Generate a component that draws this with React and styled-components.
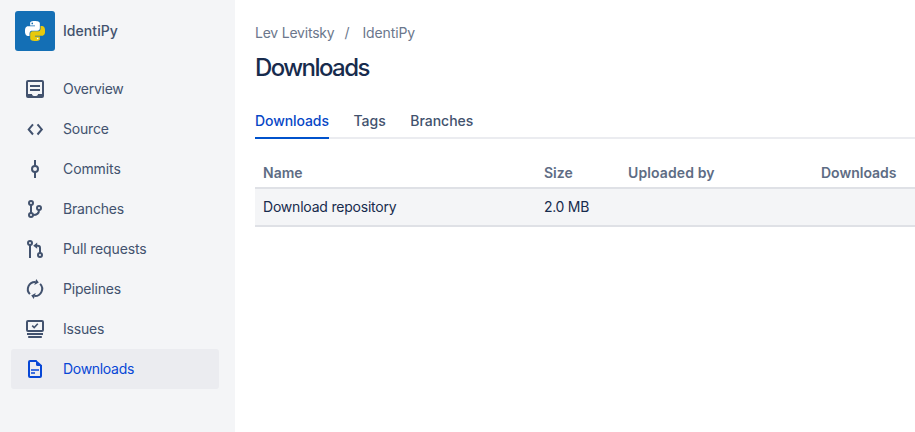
import React from "react";
import styled, { createGlobalStyle } from "styled-components";

const GlobalStyle = createGlobalStyle`
  * { box-sizing: border-box; }
  body {
    margin: 0;
    overflow: hidden;
    background: #fff;
    color: #172b4d;
    font: 14px/20px Inter, "Liberation Sans", sans-serif;
  }
`;

const Page = styled.div`
  display: flex;
  width: 100%;
  height: 100vh;
  overflow: hidden;
`;

const Sidebar = styled.aside`
  flex: 0 0 235px;
  padding: 11px 16px 0 11px;
  background: #f4f5f7;
  color: #42526e;
`;

const Repo = styled.div`
  display: flex;
  align-items: center;
  height: 40px;
  margin: 0 0 18px 4px;
  gap: 8px;
`;

const Avatar = styled.div`
  display: flex;
  align-items: center;
  justify-content: center;
  width: 40px;
  height: 40px;
  border-radius: 3px;
  background: #146fb5;
`;

const Text = styled.span`
  white-space: nowrap;
  letter-spacing: ${(p) => p.$track || 0}px;
`;

const RepoName = styled(Text)`
  font-weight: 500;
`;

const NavItem = styled.a`
  display: flex;
  align-items: center;
  gap: 16px;
  height: 40px;
  padding-left: 12px;
  border-radius: 3px;
  color: ${(p) => (p.$active ? "#0747d6" : "#42526e")};
  background: ${(p) => (p.$active ? "#ebecf0" : "transparent")};
`;

const Icon = styled.svg`
  flex: none;
  width: 24px;
  height: 24px;
  fill: none;
  stroke: currentColor;
  stroke-width: 2;
`;

const Main = styled.main`
  flex: 1;
  min-width: 0;
  padding: 23px 0 0 20px;
`;

const Crumbs = styled.nav`
  display: flex;
  height: 20px;
  color: #6b778c;
`;

const Slash = styled.span`
  width: 28px;
  padding-left: 10px;
`;

const Title = styled.h1`
  margin: 11px 0 0;
  font-size: 24px;
  line-height: 28px;
  font-weight: 500;
  letter-spacing: ${(p) => p.$track}px;
`;

const Tabs = styled.div`
  display: flex;
  gap: 24.5px;
  height: 34px;
  margin-top: 23px;
  box-shadow: inset 0 -2px #ebecf0;
`;

const Tab = styled.a`
  height: 34px;
  padding-top: 6px;
  font-weight: 500;
  white-space: nowrap;
  letter-spacing: ${(p) => p.$track || 0}px;
  color: ${(p) => (p.$active ? "#0747c6" : "#42526e")};
  box-shadow: ${(p) => (p.$active ? "inset 0 -2px #0052cc" : "none")};
`;

const Row = styled.div`
  display: grid;
  grid-template-columns: 281px 84px 193px 1fr;
  align-items: center;
  padding-left: 8px;
  border-bottom: 2px solid #dfe1e6;
`;

const HeadRow = styled(Row)`
  height: 32px;
  margin-top: 18px;
  padding-top: 2px;
  color: #5e6c84;
  font-weight: 600;
`;

const BodyRow = styled(Row)`
  height: 38px;
  background: #f4f5f7;
`;

const glyphs = {
  Overview: (
    <>
      <path
        fill="currentColor"
        fillRule="evenodd"
        stroke="none"
        d="M5 3h14a2 2 0 0 1 2 2v14a2 2 0 0 1-2 2H5a2 2 0 0 1-2-2V5a2 2 0 0 1 2-2zm0 2v12h4a3 2 0 0 0 6 0h4V5z"
      />
      <path d="M7 9h10M7 13h10" />
    </>
  ),
  Source: <path d="M10 7.3 5.7 12.4 10 17.5M14.5 7.3l4.3 5.1-4.3 5.1" />,
  Commits: (
    <>
      <circle cx="12" cy="12" r="3" />
      <path d="M12 3v6M12 15v6" />
    </>
  ),
  Branches: (
    <>
      <circle cx="8" cy="6" r="2" />
      <circle cx="8" cy="18" r="2" />
      <circle cx="16" cy="11" r="2" />
      <path d="M8 8v8M16 13c0 3-2 5-6 5" />
    </>
  ),
  "Pull requests": (
    <>
      <circle cx="7" cy="6" r="2" />
      <circle cx="17" cy="18" r="2" />
      <path d="M7 8v13M17 16v-5c0-1.6-.7-2.3-2.2-2.3H12" />
      <path fill="currentColor" stroke="none" d="M14.2 5.6v6.2l-4-3.1z" />
    </>
  ),
  Pipelines: (
    <>
      <path d="M6.9 17.1A7.2 7.2 0 0 1 12.5 4.9M17.1 6.9A7.2 7.2 0 0 1 11.5 19.1" />
      <path fill="currentColor" stroke="none" d="M13.2 2l2.6 3.6-4.5 2.4zM10.8 22l-2.6-3.6 4.5-2.4z" />
    </>
  ),
  Issues: (
    <>
      <rect x="4" y="4" width="16" height="10" rx="1" />
      <path strokeWidth="1.6" d="m9.2 8.7 2 1.9 3.6-3.8" />
      <path d="M4 17h16M5.2 20h13.6" />
    </>
  ),
  Downloads: (
    <>
      <path d="M13.5 4H7a1 1 0 0 0-1 1v14a1 1 0 0 0 1 1h10a1 1 0 0 0 1-1V8.5" />
      <path fill="currentColor" stroke="none" d="M13 3l6 5.2V9h-4.5A1.5 1.5 0 0 1 13 7.5z" />
      <path d="M8 13h8M8 16h4" strokeWidth="1.7" />
    </>
  ),
};

const nav = [
  ["Overview", -0.25],
  ["Source", -0.2],
  ["Commits", -0.1],
  ["Branches", -0.17],
  ["Pull requests", -0.15],
  ["Pipelines", -0.18],
  ["Issues", -0.2],
  ["Downloads", -0.3],
];

const PythonLogo = () => (
  <svg width="20" height="20" viewBox="0 0 24 24">
    <path
      fill="#fff"
      d="M14.25.18l.9.2.73.26.59.3.45.32.34.34.25.34.16.33.1.3.04.26.02.2-.01.13V8.5l-.05.63-.13.55-.21.46-.26.38-.3.31-.33.25-.35.19-.35.14-.33.1-.3.07-.26.04-.21.02H8.77l-.69.05-.59.14-.5.22-.41.27-.33.32-.27.35-.2.36-.15.37-.1.35-.07.32-.04.27-.02.21v3.06H3.17l-.21-.03-.28-.07-.32-.12-.35-.18-.36-.26-.36-.36-.35-.46-.32-.59-.28-.73-.21-.88-.14-1.05-.05-1.23.06-1.22.16-1.04.24-.87.32-.71.36-.57.4-.44.42-.33.42-.24.4-.16.36-.1.32-.05.24-.01h.16l.06.01h8.16v-.83H6.18l-.01-2.75-.02-.37.05-.34.11-.31.17-.28.25-.26.31-.23.38-.2.44-.18.51-.15.58-.12.64-.1.71-.06.77-.04.84-.02 1.27.05z"
    />
    <path
      fill="#e8c90c"
      d="M21.1 6.11l.28.06.32.12.35.18.36.27.36.35.35.47.32.59.28.73.21.88.14 1.04.05 1.23-.06 1.23-.16 1.04-.24.86-.32.71-.36.57-.4.45-.42.33-.42.24-.4.16-.36.09-.32.05-.24.02-.16-.01h-8.22v.82h5.84l.01 2.76.02.36-.05.34-.11.31-.17.29-.25.25-.31.24-.38.2-.44.17-.51.15-.58.13-.64.09-.71.07-.77.04-.84.01-1.27-.04-1.07-.14-.9-.2-.73-.25-.59-.3-.45-.33-.34-.34-.25-.34-.16-.33-.1-.3-.04-.25-.02-.2.01-.13v-5.34l.05-.64.13-.54.21-.46.26-.38.3-.32.33-.24.35-.2.35-.14.33-.1.3-.06.26-.04.21-.02.13-.01h5.84l.69-.05.59-.14.5-.21.41-.28.33-.32.27-.35.2-.36.15-.36.1-.35.07-.32.04-.28.02-.21V6.07h2.09l.14.01z"
    />
    <circle cx="8.7" cy="2.9" r="1" fill="#146fb5" />
    <circle cx="15.2" cy="21.1" r="1" fill="#fff" />
  </svg>
);

export default function App() {
  return (
    <Page>
      <GlobalStyle />
      <Sidebar>
        <Repo>
          <Avatar>
            <PythonLogo />
          </Avatar>
          <RepoName $track={0.05}>IdentiPy</RepoName>
        </Repo>
        {nav.map(([label, track]) => (
          <NavItem key={label} $active={label === "Downloads"}>
            <Icon viewBox="0 0 24 24">{glyphs[label]}</Icon>
            <Text $track={track}>{label}</Text>
          </NavItem>
        ))}
      </Sidebar>
      <Main>
        <Crumbs>
          <Text $track={-0.22}>Lev Levitsky</Text>
          <Slash>/</Slash>
          <Text $track={-0.12}>IdentiPy</Text>
        </Crumbs>
        <Title $track={-1.57}>Downloads</Title>
        <Tabs>
          <Tab $active $track={-0.08}>Downloads</Tab>
          <Tab>Tags</Tab>
          <Tab>Branches</Tab>
        </Tabs>
        <HeadRow>
          <Text>Name</Text>
          <Text>Size</Text>
          <Text $track={0.12}>Uploaded by</Text>
          <Text>Downloads</Text>
        </HeadRow>
        <BodyRow>
          <Text $track={-0.21}>Download repository</Text>
          <Text $track={-0.3}>2.0 MB</Text>
        </BodyRow>
      </Main>
    </Page>
  );
}
